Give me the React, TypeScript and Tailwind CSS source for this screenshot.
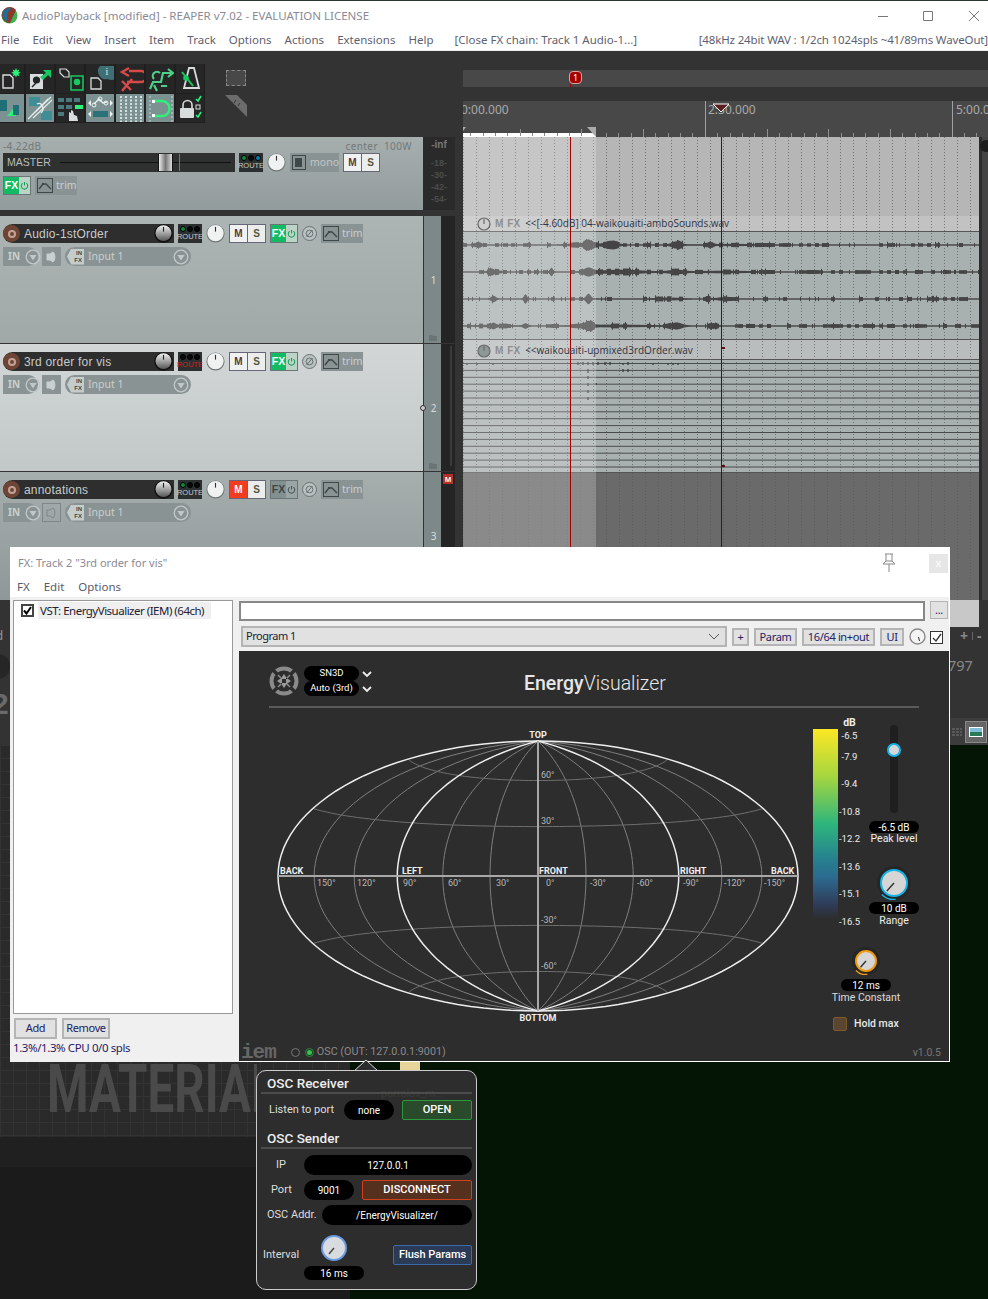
import type { ReactNode } from "react";

const ui = "font-['Noto_Sans',sans-serif]";
const rb = "font-['Roboto',sans-serif]";

// ---------- small shared pieces ----------

function Knob({ size = 19 }: { size?: number }) {
  return (
    <svg width={size} height={size} viewBox="0 0 20 20" className="shrink-0">
      <circle cx="10" cy="10" r="9.5" fill="#6f7676" />
      <circle cx="10" cy="9.6" r="8.6" fill="#f0f2f2" />
      <path d="M10 3v5" stroke="#333" strokeWidth="1.2" />
    </svg>
  );
}

function DarkKnob() {
  return (
    <svg width="19" height="19" viewBox="0 0 20 20" className="shrink-0">
      <defs>
        <linearGradient id="dk" x1="0" y1="0" x2="0" y2="1">
          <stop offset="0" stopColor="#f4f4f4" />
          <stop offset="1" stopColor="#555" />
        </linearGradient>
      </defs>
      <circle cx="10" cy="10" r="9.8" fill="#111" />
      <circle cx="10" cy="9.6" r="8.4" fill="url(#dk)" />
      <path d="M10 3v5" stroke="#222" strokeWidth="1.2" />
    </svg>
  );
}

function Route({ dots, red }: { dots: [string, string, string]; red?: boolean }) {
  return (
    <div className="flex h-[19px] w-[24px] shrink-0 flex-col items-center bg-[#2b2f2f] pt-[2px]">
      <div className="flex gap-[1px]">
        {dots.map((c, i) => (
          <span key={i} className="h-[6px] w-[6px] rounded-full border border-black" style={{ backgroundColor: c }} />
        ))}
      </div>
      <span className={`mt-[1px] font-['Liberation_Sans',sans-serif] text-[7.5px] leading-[8px] ${red ? "text-[#d11f1f]" : "text-[#c4c8c8]"}`}>
        ROUTE
      </span>
    </div>
  );
}

function MuteSolo({ muted }: { muted?: boolean }) {
  return (
    <div className="flex h-[19px] w-[37px] shrink-0 border border-[#667] bg-[#667] font-['Liberation_Sans',sans-serif] text-[10px] font-bold">
      <span className={`flex flex-1 items-center justify-center ${muted ? "bg-[#f23c1f] text-white" : "bg-[#f0f1f1] text-[#5a3a30]"}`}>M</span>
      <span className="ml-[1px] flex flex-1 items-center justify-center bg-[#eceeee] text-[#55553c]">S</span>
    </div>
  );
}

function FxBtn({ on = true }: { on?: boolean }) {
  return (
    <div className="flex h-[19px] w-[28px] shrink-0 border border-[#6b7575] font-['Liberation_Sans',sans-serif] text-[10.5px] font-bold">
      <span className={`flex w-[15px] items-center justify-center ${on ? "bg-[#12bb63] text-white" : "bg-[#849090] text-[#3c4646]"}`}>FX</span>
      <span className={`flex flex-1 items-center justify-center ${on ? "bg-[#bcd4c8]" : "bg-[#9aa5a5]"}`}>
        <svg width="9" height="9" viewBox="0 0 10 10" fill="none" stroke={on ? "#12a058" : "#4a5555"} strokeWidth="1.2">
          <path d="M3 2.4a3.6 3.6 0 1 0 4 0M5 1v4" />
        </svg>
      </span>
    </div>
  );
}

function Trim() {
  return (
    <div className="flex h-[19px] w-[42px] shrink-0 items-center bg-[#8a9393] pl-[2px]">
      <svg width="16" height="15" viewBox="0 0 16 15" fill="none">
        <rect x=".5" y=".5" width="15" height="14" fill="#8a9393" stroke="#3f4848" />
        <path d="M2 11l4-5h3l5 5" stroke="#3f4848" strokeWidth="1.4" />
        <rect x="5" y="5" width="2" height="2" fill="#3f4848" />
      </svg>
      <span className={`ml-[3px] ${ui} text-[10.5px] text-[#c8d0d0]`}>trim</span>
    </div>
  );
}

function Phase() {
  return (
    <svg width="15" height="15" viewBox="0 0 15 15" fill="none" className="shrink-0">
      <circle cx="7.5" cy="7.5" r="7" fill="#b9c2c2" stroke="#69716f" />
      <circle cx="7.5" cy="7.5" r="3.4" stroke="#69716f" />
      <path d="M4.5 11l6-7" stroke="#69716f" />
    </svg>
  );
}

function DownCircle() {
  return (
    <svg width="16" height="16" viewBox="0 0 16 16" fill="none">
      <circle cx="8" cy="8" r="6.8" stroke="#c0c8c8" strokeWidth="1.3" />
      <path d="M4.4 6h7.2L8 11.4z" fill="#c0c8c8" />
    </svg>
  );
}

function Folder() {
  return (
    <svg width="8" height="6" viewBox="0 0 8 6" className="absolute bottom-[2px] left-[5px]">
      <path d="M0 0h3l1 1h4v5H0z" fill="#6a7474" />
    </svg>
  );
}

function TrackPanel({
  name,
  num,
  grow,
  bg,
  dots,
  red,
  muted,
  fxOn = true,
  speakerOff,
  pin,
}: {
  name: string;
  num: string;
  grow: string;
  bg: string;
  dots: [string, string, string];
  red?: boolean;
  muted?: boolean;
  fxOn?: boolean;
  speakerOff?: boolean;
  pin?: boolean;
}) {
  return (
    <div className={`flex ${grow}`}>
      <div className={`flex w-[423px] flex-col pl-[3px] pt-[8px] ${bg}`}>
        <div className="flex h-[19px] items-center">
          <div className="flex h-[19px] w-[171px] items-center rounded-l-full bg-[#2e2e2e] pr-[1px]">
            <span className="flex h-[17px] w-[17px] items-center justify-center rounded-full bg-[#6e4435]">
              <span className="h-[8px] w-[8px] rounded-full border-2 border-[#c2a396]" />
            </span>
            <span className="ml-[4px] flex-1 font-['Liberation_Sans',sans-serif] text-[12px] tracking-[0.2px] text-[#c6cbcb]">{name}</span>
            <DarkKnob />
          </div>
          <div className="ml-[4px] flex items-center">
            <Route dots={dots} red={red} />
            <span className="ml-[4px]"><Knob /></span>
            <span className="ml-[4px]"><MuteSolo muted={muted} /></span>
            <span className="ml-[4px]"><FxBtn on={fxOn} /></span>
            <span className="ml-[4px] flex"><Phase /></span>
            <span className="ml-[4px]"><Trim /></span>
          </div>
        </div>
        <div className="mt-[4px] flex h-[19px] items-center">
          <div className={`flex h-[19px] w-[35px] items-center rounded-r-full bg-[#8a9393] pl-[5px] ${ui} text-[10px] font-bold text-[#c8d0d0]`}>
            IN
            <span className="ml-[5px] flex"><DownCircle /></span>
          </div>
          <div className={`ml-[4px] flex h-[19px] w-[19px] items-center justify-center ${speakerOff ? "border border-[#7d8787]" : "bg-[#8a9393]"}`}>
            <svg width="11" height="12" viewBox="0 0 11 12" fill={speakerOff ? "none" : "#c8d0d0"} stroke={speakerOff ? "#7d8787" : "#c8d0d0"}>
              <path d="M1 3h3l3-2c2.500 2 2.500 8 0 10L4 9H1z" />
            </svg>
          </div>
          <div className={`ml-[4px] flex h-[19px] w-[126px] items-center rounded-full bg-[#8a9393] pl-[2px] pr-[2px] ${ui} text-[10.5px] text-[#c8d0d0]`}>
            <span className="flex h-[16px] w-[17px] flex-col items-end justify-center bg-[#c5cccc] pr-[2px] font-['Liberation_Sans',sans-serif] text-[6px] font-bold leading-[6.500px] text-[#3f4848] [clip-path:polygon(25%_0,100%_0,100%_100%,25%_100%,0_50%)]">
              <span>IN</span>
              <span>FX</span>
            </span>
            <span className="ml-[4px] flex-1">Input 1</span>
            <DownCircle />
          </div>
        </div>
      </div>
      <div className="relative flex w-[18px] flex-col items-center justify-center border-l border-[#333] bg-[#7d8888] pl-[2px] pt-[1px] text-[10px] text-[#d8dddd]">
        <span className={ui}>{num}</span>
        {pin && <span className="absolute left-[-4px] top-[61px] h-[6px] w-[6px] rounded-full border border-[#333] bg-[#c8cccc]" />}
        {num !== "3" && <Folder />}
      </div>
      <div className="flex w-[14px] justify-end bg-[#242424] pr-[3px]">
        {pin && <span className="mt-[2px] h-[120px] w-[2px] bg-[#3a3a3a]" />}
        {num === "3" && (
          <span className={`mr-[-1px] mt-[2px] flex h-[10px] w-[10px] items-center justify-center bg-[#b03030] ${ui} text-[7px] font-bold leading-none text-white`}>M</span>
        )}
      </div>
      <div className="w-[8px] bg-[#333]" />
    </div>
  );
}

// ---------- toolbar ----------

const G = "#2df27a";
const W = "#d8dcdc";
const R = "#d84a4a";

const topIcons: ReactNode[] = [
  <>
    <path d="M3 10h7l3 3v10H3z" stroke={W} strokeWidth="1.4" fill="none" />
    <path d="M16 3l1 2.400 2.400-1-1 2.400 2.400 1-2.400 1 1 2.400-2.400-1-1 2.400-1-2.400-2.400 1 1-2.400-2.400-1 2.400-1-1-2.400 2.400 1z" fill={G} />
  </>,
  <>
    <rect x="4" y="9" width="13" height="15" fill={W} />
    <circle cx="10.5" cy="15" r="3.6" fill="#222" />
    <path d="M6 22l4-4" stroke="#222" strokeWidth="1.5" />
    <path d="M14 12l6-4-3-3h8v8l-3-3-5 5z" fill="#18c860" />
  </>,
  <>
    <rect x="15" y="11" width="12" height="14" fill="none" stroke="#18c860" strokeWidth="1.5" />
    <circle cx="21" cy="17" r="3.2" fill="#18c860" />
    <path d="M17 23l3-3" stroke="#222" />
    <path d="M4 4h6l3 3v5H8L4 8z" fill="none" stroke={W} strokeWidth="1.2" />
  </>,
  <>
    <path d="M5 13h7l3 3v8H5z" fill="none" stroke={W} strokeWidth="1.3" />
    <path d="M14 1h15v13a7 7 0 0 1-7 0 8 8 0 0 1-8-13z" fill="#3f6f74" />
    <text x="21" y="10" fontSize="10" fill="#e0e8e8" fontFamily="Liberation Serif" textAnchor="middle">i</text>
  </>,
  <path d="M13 6H25a5 5 0 0 1 0 11H11m2-14l-7 4 7 4M16 14L6 26m0-10l9 9" fill="none" stroke={R} strokeWidth="2.4" />,
  <path d="M4 24l3-7h8l2-9h8m-3-4l5 4-5 4M11 26l-3-6m7 1h6M8 14a4 4 0 0 1 6-6" fill="none" stroke="#4ed08a" strokeWidth="2.200" />,
  <>
    <path d="M13 3h5l5 20H8z" fill="none" stroke={W} strokeWidth="1.8" />
    <path d="M6 7l11 14" stroke="#18c860" strokeWidth="2" />
    <circle cx="10" cy="13" r="2.8" fill="#18c860" />
  </>,
];

const botIcons: ReactNode[] = [
  <>
    <rect x="0" y="6" width="7" height="11" fill="#1f6f78" />
    <path d="M7 22L16 11v11z" fill={G} />
    <rect x="13" y="11" width="6" height="10" fill="#1f6f78" />
  </>,
  <>
    <rect x="3" y="3" width="11" height="9" fill="#3f8e96" />
    <rect x="15" y="17" width="11" height="9" fill="#3f8e96" />
    <path d="M2 25L25 3M4 23L22 5M7 24L26 6" stroke="#e4eaea" strokeWidth="1.2" fill="none" />
    <path d="M11 10c5-3 8 5 4 9" stroke="#e4eaea" fill="none" strokeWidth="1.4" />
  </>,
  <>
    <path d="M2 4h6v4H2zM10 4h6v4h-6zM18 4h6v4h-6zM2 11h6v4H2zM2 18h6v4H2zM10 11h6v4h-6z" fill="#4a7a7e" />
    <rect x="19" y="11" width="8" height="4" fill={G} />
    <path d="M13 27v-9l2 1v-3l2 1 1 4 3 1 1 5H13z" fill={W} />
  </>,
  <>
    <path d="M8 10l5-5 4 4 4-1" fill="none" stroke="#eef2f2" strokeWidth="1.4" />
    <circle cx="8" cy="11" r="2" fill="none" stroke="#eef2f2" />
    <circle cx="14" cy="5" r="2" fill="none" stroke="#eef2f2" />
    <circle cx="20" cy="9" r="2" fill="none" stroke="#eef2f2" />
    <rect x="7" y="17" width="15" height="6" fill="#2a7278" />
    <path d="M5 17v6l-3-3zM24 17v6l3-3zM5 6v6L2 9zM24 6v6l3-3z" fill="#eef2f2" />
  </>,
  <path d="M5 2v26M10 2v26M15 2v26M20 2v26M25 2v26" stroke="#eef2f2" strokeWidth="1.6" strokeDasharray="2 1.5" />,
  <>
    <path d="M4 2v26M26 2v26" stroke="#c8d4d4" strokeDasharray="2 2" />
    <path d="M6 7h10a7 7 0 0 1 0 15H6" fill="none" stroke={G} strokeWidth="2.400" />
    <path d="M6 6h3v3H6zM6 20h3v3H6z" fill="#fff" />
  </>,
  <>
    <path d="M7 14v-3a4.500 4.500 0 0 1 9 0v3" fill="none" stroke={W} strokeWidth="1.6" />
    <rect x="4" y="14" width="14" height="10" rx="1" fill={W} />
    <path d="M20 5l2 2 3-5M20 21l2 2 3-5" stroke={G} fill="none" strokeWidth="1.6" />
    <rect x="20" y="11" width="4" height="4" stroke={W} fill="none" />
  </>,
];

function ToolBtn({ active, w = 28, children }: { active?: boolean; w?: number; children: ReactNode }) {
  return (
    <div className={`flex h-full items-center justify-end ${w === 24 ? "w-[24px]" : "w-[28px]"} ${active ? "bg-[#7c9292]" : "bg-[#262626]"}`}>
      <svg width={w} height="28" viewBox={`0 0 ${w} 28`}>
        {children}
      </svg>
    </div>
  );
}

function Toolbar() {
  const act = [true, true, false, true, true, true, false];
  return (
    <div className="flex h-[86px] items-start bg-[#333] pt-[13px]">
      <div className="flex h-[59px] w-[205px] flex-col gap-[1px] bg-[#1f1f1f]">
        <div className="flex h-[29px] gap-[2px]">
          {topIcons.map((ic, i) => (
            <ToolBtn key={i} w={i === 0 ? 24 : 28}>{ic}</ToolBtn>
          ))}
        </div>
        <div className="flex h-[28px] gap-[2px]">
          {botIcons.map((ic, i) => (
            <ToolBtn key={i} w={i === 0 ? 24 : 28} active={act[i]}>{ic}</ToolBtn>
          ))}
        </div>
      </div>
      <div className="ml-[20px] flex flex-col items-center gap-[9px] pt-[6px]">
        <div className="h-[16px] w-[20px] border border-dashed border-[#888] bg-[#484848]" />
        <svg width="22" height="22" viewBox="0 0 22 22">
          <path d="M0 0h12l10 10v12z" fill="#6c6c6c" />
          <path d="M11 5l-2 3M15 8l-2 3" stroke="#333" />
        </svg>
      </div>
    </div>
  );
}

function MasterPanel() {
  return (
    <div className="flex h-[73px]">
      <div className="flex w-[423px] flex-col bg-gradient-to-b from-[#a6aeae] to-[#939c9c] px-[3px] pt-[3px]">
        <div className={`flex h-[13px] items-center justify-between pr-[8px] ${ui} text-[10px] tracking-[0.4px] text-[#727a7a]`}>
          <span>-4.22dB</span>
          <span>center&nbsp; 100W</span>
        </div>
        <div className="flex h-[19px] items-center">
          <div className="flex h-[19px] w-[232px] items-center bg-[#2f3030] pl-[4px]">
            <span className="w-[53px] font-['Liberation_Sans',sans-serif] text-[10.5px] text-[#b8bdbd]">MASTER</span>
            <div className="relative h-[1px] w-[171px] bg-[#111]">
              <span className="absolute left-[98px] top-[-8px] h-[17px] w-[15px] border-x border-[#111] bg-gradient-to-r from-[#eee] via-[#777] to-[#ddd]" />
              <span className="absolute left-[119px] top-[-8px] h-[17px] w-[1px] bg-[#777]" />
            </div>
          </div>
          <span className="ml-[4px]"><Route dots={["#0a8a3a", "#0a0a0a", "#0a7fb0"]} /></span>
          <span className="ml-[4px]"><Knob /></span>
          <div className="ml-[4px] flex h-[19px] w-[49px] items-center bg-[#8a9393] pl-[2px]">
            <span className="flex h-[15px] w-[15px] items-center justify-center border border-[#3f4848]">
              <span className="h-[9px] w-[7px] bg-[#3f4848]" />
            </span>
            <span className={`ml-[4px] ${ui} text-[10.5px] text-[#c0c8c8]`}>mono</span>
          </div>
          <span className="ml-[4px]"><MuteSolo /></span>
        </div>
        <div className="mt-[4px] flex items-center gap-[4px]">
          <FxBtn />
          <Trim />
        </div>
      </div>
      <div className={`flex w-[32px] flex-col items-center bg-[#2a2a2a] pt-[2px] font-['Liberation_Sans',sans-serif] text-[9px] font-bold leading-[12px] text-[#4c4c4c]`}>
        <span className="mb-[6px] text-[10px] text-[#777]">-inf</span>
        <span>-18-</span>
        <span>-30-</span>
        <span>-42-</span>
        <span>-54-</span>
      </div>
      <div className="w-[8px] bg-[#333]" />
    </div>
  );
}

// ---------- arrange ----------

type Burst = [number, number, number];

function rnd(i: number) {
  const s = Math.sin(i * 12.9898) * 43758.5453;
  return s - Math.floor(s);
}

function wavePath(cy: number, bursts: Burst[], seed: number, density: number) {
  let d = "";
  for (let x = 0; x < 516; x += 1) {
    let a = 0.7;
    for (const [bx, bw, ba] of bursts) {
      const t = (x - bx) / bw;
      a += ba * Math.exp(-t * t);
    }
    const block = Math.floor(x / 4);
    const r = rnd(block * 0.37 + seed);
    if (r > density) a += 0.5 + r * 0.8;
    if (rnd(x * 1.7 + seed) > 0.93) a += 1.4;
    d += `M${x + 0.5} ${(cy - a).toFixed(1)}V${(cy + a).toFixed(1)}`;
  }
  return d;
}

const waveCh: { cy: number; bursts: Burst[]; seed: number; density: number }[] = [
  { cy: 13, seed: 1, density: 0.55, bursts: [[16, 3, 2], [125, 4, 4], [118, 14, 1.2], [143, 7, 1.4], [151, 6, 2], [213, 6, 3], [248, 3, 2], [270, 30, 0.4]] },
  { cy: 40, seed: 2, density: 0.62, bursts: [[28, 3, 2], [88, 2, 3.5], [32, 8, 1], [125, 6, 3.5], [158, 26, 1.6], [213, 10, 1.5], [260, 30, 0.6]] },
  { cy: 67, seed: 3, density: 0.75, bursts: [[30, 3, 2.5], [62, 2, 4], [125, 3, 4.5], [205, 14, 0.8], [245, 2, 3], [258, 6, 1]] },
  { cy: 94, seed: 4, density: 0.6, bursts: [[30, 3, 2], [62, 3, 2], [125, 5, 4], [213, 7, 2.8], [250, 4, 2.2], [150, 40, 0.7], [30, 20, 0.6]] },
];

function Waveform() {
  return (
    <svg width="516" height="107" className="block">
      {waveCh.map((c) => (
        <path key={c.cy} d={wavePath(c.cy, c.bursts, c.seed, c.density)} stroke="#444" strokeWidth="1" fill="none" />
      ))}
    </svg>
  );
}

const lineYs = Array.from({ length: 16 }, (_, i) => 3.5 + i * 6.9);

function ManyLines() {
  return (
    <svg width="516" height="112" className="block">
      {lineYs.map((y) => (
        <path key={y} d={`M0 ${y.toFixed(1)}H516`} stroke="#4a4a4a" strokeWidth="1" />
      ))}
      <path d="M4 3v2M14 3v2M30 3v2M115 2v3M120 2v3M125 2v3M130 2v3M135 2v3M142 2v3M147 2v3M160 3v2M165 2v3M190 3v2M205 3v2M210 3v2M215 3v2M125 9v4M160 9v3M165 9v3M125 16v3M125 23v3M133 23v2M125 30v3M125 37v3" stroke="#444" strokeWidth="1.5" />
    </svg>
  );
}

function ItemHead({ label, dim }: { label: ReactNode; dim?: boolean }) {
  return (
    <div className="relative z-10 flex h-[15px] items-center pl-[14px]">
      <svg width="14" height="14" viewBox="0 0 14 14" fill={dim ? "#8f9797" : "none"} stroke="#6a6a6a" strokeWidth="1.2">
        <circle cx="7" cy="7" r="6" />
        <path d="M7 2v5" />
      </svg>
      <span className={`ml-[4px] font-['Liberation_Sans',sans-serif] text-[10px] font-bold text-[#8c9090]`}>M</span>
      <span className={`ml-[4px] font-['Liberation_Sans',sans-serif] text-[10px] font-bold text-[#8c9090]`}>FX</span>
      <span className="ml-[5px] font-['Open_Sans',sans-serif] text-[10px] text-[#2f3545]">{label}</span>
    </div>
  );
}

function Ruler() {
  const ticks = Array.from({ length: 44 }, (_, i) => i);
  return (
    <svg width="525" height="36" className="block">
      <rect width="525" height="36" fill="#484848" />
      {ticks.map((i) => {
        const x = Math.round(-5.2 + 12.35 * i) + 0.5;
        const major = i % 20 === 0;
        const mid = i % 5 === 0;
        return <path key={i} d={`M${x} ${major ? 0 : mid ? 28 : 32}V36`} stroke={major ? "#a0a0a0" : "#909090"} />;
      })}
      <rect x="0" y="32" width="133" height="4" fill="#fff" />
      {ticks.slice(0, 11).map((i) => (
        <path key={i} d={`M${Math.round(-5.2 + 12.35 * i) + 0.5} 32v3`} stroke="#888" />
      ))}
      <path d="M124 26h9v10zM0 26h3l-3 4z" fill="#aaa" />
      <text x="-2" y="13" fontSize="12" fill="#a8a8a8" fontFamily="Noto Sans">0:00.000</text>
      <text x="245" y="13" fontSize="12" fill="#a8a8a8" fontFamily="Noto Sans">2:30.000</text>
      <text x="493" y="13" fontSize="12" fill="#a8a8a8" fontFamily="Noto Sans">5:00.0</text>
      <path d="M250 3h16l-8 8z" fill="#5a2020" stroke="#fff" />
    </svg>
  );
}

function ArrangeOverlay() {
  const grid = Array.from({ length: 40 }, (_, i) => 0.5 + i * 13);
  return (
    <svg width="516" height="463" className="absolute left-0 top-0">
      {grid.map((x) => (
        <path key={x} d={`M${x} 0V463`} stroke="#555" strokeOpacity="0.7" strokeDasharray="1 2" />
      ))}
      <rect x="0" y="0" width="133" height="463" fill="#fff" fillOpacity="0.22" />
      <path d="M107.5 0V463" stroke="#a30000" />
      <path d="M258.5 0V463" stroke="#4a1414" />
      <path d="M259 211h3M259 329h3" stroke="#5a1010" strokeWidth="2" />
    </svg>
  );
}

function Arrange() {
  return (
    <div className="flex flex-col">
      <div className="h-[19px] bg-[#333]" />
      <div className="relative h-[17px] bg-[#484848]">
        <span className={`absolute left-[106px] top-[1px] flex h-[13px] w-[13px] items-center justify-center rounded-[4px] border border-[#e0a0a0] bg-[#a30000] ${ui} text-[9px] leading-none text-white`}>1</span>
        <span className="absolute left-[107px] top-[14px] h-[3px] w-[1px] bg-[#a30000]" />
      </div>
      <div className="h-[14px] bg-[#333]" />
      <Ruler />
      <div className="flex">
        <div className="relative w-[516px]">
          <div className="flex flex-col">
            <div className="h-[79px] bg-[#b6b6b6]" />
            <div className="h-[15px] bg-[#c2c2c2]">
              <ItemHead label={<>&lt;&lt;[-4.60dB] 04-waikouaiti-amboSounds.wav</>} />
            </div>
            <div className="h-[108px] border-t border-[#555] bg-[#a9b0b0]"><Waveform /></div>
            <div className="h-[1px] bg-[#555]" />
            <div className="h-[19px] bg-[#b9bdbd] pt-[3px]">
              <ItemHead dim label="<<waikouaiti-upmixed3rdOrder.wav" />
            </div>
            <div className="h-[1px] bg-[#555]" />
            <div className="h-[112px] bg-[#a9b0b0]"><ManyLines /></div>
            <div className="h-[128px] border-t border-[#555] bg-[#6a6a6a]" />
          </div>
          <ArrangeOverlay />
        </div>
        <div className="flex w-[9px] flex-col border-l-[3px] border-[#2c2c2c] bg-[#444]">
          <span className="-ml-[2px] mt-[3px] h-[12px] w-[8px] rounded-l-full bg-[#1c1c1c]" />
        </div>
      </div>
      <div className="flex h-[27px]">
        <div className="w-[516px] bg-[#c8c8c8]" />
        <div className="flex-1 bg-[#333]" />
      </div>
    </div>
  );
}

// ---------- plugin ----------

const S2 = Math.SQRT2;
const toRad = Math.PI / 180;

function hammer(lon: number, lat: number) {
  const l = lon * toRad;
  const p = lat * toRad;
  const d = Math.sqrt(1 + Math.cos(p) * Math.cos(l / 2));
  const x = (2 * S2 * Math.cos(p) * Math.sin(l / 2)) / d;
  const y = (S2 * Math.sin(p)) / d;
  return [269 + x * 91.92, 151 - y * 95.46];
}

function meridian(lon: number) {
  let d = "";
  for (let lat = -90; lat <= 90; lat += 3) {
    const [x, y] = hammer(lon, lat);
    d += `${d ? "L" : "M"}${x.toFixed(1)} ${y.toFixed(1)}`;
  }
  return d;
}

function parallel(lat: number) {
  let d = "";
  for (let lon = -180; lon <= 180; lon += 5) {
    const [x, y] = hammer(lon, lat);
    d += `${d ? "L" : "M"}${x.toFixed(1)} ${y.toFixed(1)}`;
  }
  return d;
}

function Sphere() {
  const thin = [-150, -120, -60, -30, 30, 60, 120, 150];
  const deg: [string, number][] = [
    ["150°", 48], ["120°", 88], ["90°", 134], ["60°", 179], ["30°", 227], ["0°", 277],
    ["-30°", 321], ["-60°", 368], ["-90°", 414], ["-120°", 455], ["-150°", 495],
  ];
  const lat: [string, number][] = [["60°", 53], ["30°", 99], ["-30°", 198], ["-60°", 244]];
  const bold = (t: string, x: number, y: number, anchor = "start") => (
    <text key={t + x} x={x} y={y} fontSize="9" fontWeight="700" fill="#f0f0f0" textAnchor={anchor} fontFamily="Roboto">
      {t}
    </text>
  );
  return (
    <svg width="540" height="302" className="shrink-0">
      {thin.map((l) => (
        <path key={l} d={meridian(l)} fill="none" stroke="#7e7e7e" strokeWidth="1" />
      ))}
      {[30, 60, -30, -60].map((l) => (
        <path key={l} d={parallel(l)} fill="none" stroke="#6e6e6e" strokeWidth="1" />
      ))}
      <path d={meridian(90)} fill="none" stroke="#eee" strokeWidth="1.5" />
      <path d={meridian(-90)} fill="none" stroke="#eee" strokeWidth="1.5" />
      <path d={meridian(180)} fill="none" stroke="#eee" strokeWidth="1.5" />
      <path d={meridian(-180)} fill="none" stroke="#eee" strokeWidth="1.5" />
      <path d="M9 151H529M269 16V286" stroke="#a8a8a8" strokeWidth="2" />
      {bold("TOP", 269, 13, "middle")}
      {bold("BOTTOM", 269, 296, "middle")}
      {bold("BACK", 11, 149)}
      {bold("LEFT", 133, 149)}
      {bold("FRONT", 270, 149)}
      {bold("RIGHT", 411, 149)}
      {bold("BACK", 502, 149)}
      {deg.map(([t, x]) => (
        <text key={t} x={x} y={161} fontSize="9" fill="#b8b8b8" fontFamily="Roboto">{t}</text>
      ))}
      {lat.map(([t, y]) => (
        <text key={t} x={272} y={y} fontSize="9" fill="#b8b8b8" fontFamily="Roboto">{t}</text>
      ))}
    </svg>
  );
}

function Pill({ children, className }: { children: ReactNode; className: string }) {
  return (
    <div className={`flex items-center justify-center rounded-full bg-black ${rb} text-white ${className}`}>{children}</div>
  );
}

function IemKnob({ size, color, inner }: { size: number; color: string; inner: number }) {
  const c = size / 2;
  return (
    <svg width={size} height={size} viewBox={`0 0 ${size} ${size}`} className="shrink-0">
      <circle cx={c} cy={c} r={c} fill="#262626" />
      <circle cx={c} cy={c} r={inner} fill="#d6d6d6" stroke={color} strokeWidth="2" />
      <path d={`M${c} ${c}L${c - inner * 0.55} ${c + inner * 0.62}`} stroke="#333" strokeWidth="1.4" />
      <path
        d={`M${c - c * 0.72} ${c + c * 0.68}A${c} ${c} 0 0 0 ${c + c * 0.1} ${size - 0.5}`}
        fill="none"
        stroke={color}
        strokeWidth="1.5"
      />
    </svg>
  );
}

const scale: [string, string][] = [
  ["-6.5", "h-[21px]"],
  ["-7.9", "h-[27px]"],
  ["-9.4", "h-[28px]"],
  ["-10.8", "h-[27px]"],
  ["-12.2", "h-[28px]"],
  ["-13.6", "h-[27px]"],
  ["-15.1", "h-[28px]"],
  ["-16.5", "h-[12px]"],
];

function Controls() {
  return (
    <div className={`flex flex-col ${rb} text-white`}>
      <div className="flex pl-[4px]">
        <div className="mt-[12px] h-[190px] w-[25px] bg-[linear-gradient(#fde725,#a5d63f_25%,#2eb57d_50%,#26828e_68%,#2c6a90_78%,#2f3a55_93%,#2d2d2d)]" />
        <div className="flex w-[31px] flex-col items-center pr-[8px] text-[9.5px] leading-[12px] text-[#eee]">
          <span className="h-[13px] text-[10.5px] font-bold">dB</span>
          {scale.map(([t, h]) => (
            <span key={t} className={h}>{t}</span>
          ))}
        </div>
        <div className="flex w-[50px] flex-col items-center pt-[8px]">
          <div className="relative h-[88px] w-[8px] rounded-full bg-[#1f1f1f]">
            <span className="absolute left-[-3px] top-[18px] h-[14px] w-[14px] rounded-full border-2 border-[#14b4e6] bg-[#d6d6d6]" />
          </div>
          <Pill className="mt-[8px] h-[12px] w-[50px] text-[10px]">-6.5 dB</Pill>
          <span className="mt-[-1px] text-[10.5px] leading-[14px] text-[#eee]">Peak level</span>
          <div className="mt-[20px] flex"><IemKnob size={34} color="#14b4e6" inner={13} /></div>
          <Pill className="mt-[2px] h-[12px] w-[50px] text-[10px]">10 dB</Pill>
          <span className="text-[10.5px] leading-[14px] text-[#eee]">Range</span>
        </div>
      </div>
      <div className="ml-[22px] mt-[19px] flex w-[70px] flex-col items-center">
        <IemKnob size={28} color="#f09a10" inner={10} />
        <Pill className="mt-[4px] h-[12px] w-[50px] text-[10px]">12 ms</Pill>
        <span className="whitespace-nowrap text-[10.5px] leading-[14px] text-[#ddd]">Time Constant</span>
      </div>
      <div className="ml-[24px] mt-[11px] flex items-center">
        <span className="h-[14px] w-[14px] rounded-[2px] border border-[#7a5a2a] bg-[#5a4630]" />
        <span className="ml-[7px] text-[10.5px] font-medium text-[#e8e8e8]">Hold max</span>
      </div>
    </div>
  );
}

function IemIcon() {
  return (
    <svg width="30" height="30" viewBox="0 0 30 30" fill="none" className="shrink-0">
      <circle cx="15" cy="15" r="12.5" stroke="#8a8a8a" strokeWidth="4" />
      <path d="M4 4l8 8M26 4l-8 8M4 26l8-8M26 26l-8-8" stroke="#2d2d2d" strokeWidth="3.500" />
      <path d="M15 8l3.500 5h-7zM15 22l3.500-5h-7zM8 15l5-3.500v7zM22 15l-5-3.500v7z" fill="#9a9a9a" />
      <path d="M9 9l3 3M21 9l-3 3M9 21l3-3M21 21l-3-3" stroke="#8a8a8a" strokeWidth="1.5" />
    </svg>
  );
}

function Plugin() {
  return (
    <div className={`flex h-[411px] flex-col border-b border-white bg-[#2d2d2d] ${rb}`}>
      <div className="mx-[30px] flex h-[57px] items-start border-b-2 border-[#5a5a5a] pt-[15px]">
        <IemIcon />
        <div className="ml-[5px] flex flex-col">
          <div className="flex items-center gap-[2px]">
            <Pill className="h-[15px] w-[55px] text-[9.5px]">SN3D</Pill>
            <svg width="12" height="12" viewBox="0 0 12 12" fill="none" stroke="#eee" strokeWidth="1.8"><path d="M2 4l4 4 4-4" /></svg>
          </div>
          <div className="flex items-center gap-[2px]">
            <Pill className="h-[15px] w-[55px] text-[9.5px]">Auto (3rd)</Pill>
            <svg width="12" height="12" viewBox="0 0 12 12" fill="none" stroke="#eee" strokeWidth="1.8"><path d="M2 4l4 4 4-4" /></svg>
          </div>
        </div>
        <div className="ml-[151px] mt-[8px] text-[19.5px] leading-none text-[#e6e6e6]">
          <span className="font-medium">Energy</span>
          <span className="font-light">Visualizer</span>
        </div>
      </div>
      <div className="flex flex-1 pl-[30px] pt-[9px]">
        <div className="mt-[8px]"><Sphere /></div>
        <Controls />
      </div>
      <div className="flex h-[24px] items-center pl-[2px] pr-[8px] pt-[7px]">
        <span className="font-['Liberation_Mono',monospace] text-[21px] font-bold leading-[17px] tracking-[-1px] text-[#666]">iem</span>
        <span className="ml-[15px] h-[9px] w-[9px] rounded-full border border-[#777]" />
        <span className="ml-[5px] flex h-[9px] w-[9px] items-center justify-center rounded-full border border-[#2a8a3a]">
          <span className="h-[5px] w-[5px] rounded-full bg-[#2ec84a]" />
        </span>
        <span className="ml-[3px] flex-1 text-[10.8px] text-[#8a8a8a]">OSC (OUT: 127.0.0.1:9001)</span>
        <span className="text-[10.5px] text-[#777]">v1.0.5</span>
      </div>
    </div>
  );
}

function WinBtn({ children, className }: { children: ReactNode; className: string }) {
  return (
    <div className={`flex items-center justify-center border-2 border-[#b4b4b4] bg-[#e1e1e1] ${ui} text-[11px] tracking-[-0.35px] text-[#222266] ${className}`}>
      {children}
    </div>
  );
}

function FxWindow() {
  return (
    <div className={`absolute left-[10px] top-[547px] flex h-[515px] w-[940px] flex-col border-r border-white bg-[#f0f0f0] ${ui}`}>
      <div className="flex h-[29px] items-center bg-white pl-[8px] pr-[1px] pt-[3px]">
        <span className="flex-1 text-[11px] text-[#8a8a94]">FX: Track 2 "3rd order for vis"</span>
        <svg width="16" height="20" viewBox="0 0 16 20" fill="none" stroke="#888" className="mr-[32px]">
          <path d="M4 1h8M5 1v7M11 1v7M2 11l3-3h6l3 3zM8 11v8" />
        </svg>
        <span className="flex h-[19px] w-[19px] items-center justify-center bg-[#e6e6e6] text-[11px] text-white">x</span>
      </div>
      <div className="flex h-[21px] items-center gap-[14px] bg-white pl-[7px] pt-[1px] text-[11.5px] text-[#5a5a6a]">
        <span>FX</span>
        <span>Edit</span>
        <span>Options</span>
      </div>
      <div className="flex flex-1">
        <div className="flex w-[229px] flex-col pl-[3px] pt-[3px]">
          <div className="flex h-[414px] w-[220px] items-start border border-[#999] bg-white pl-[7px] pt-[1px]">
            <span className="mt-[2px] flex h-[13px] w-[13px] items-center justify-center border-2 border-[#444] bg-white">
              <svg width="9" height="9" viewBox="0 0 9 9" fill="none" stroke="#000" strokeWidth="2"><path d="M1 4.500l2.500 3L8 1" /></svg>
            </span>
            <span className="ml-[4px] flex h-[17px] w-[173px] items-center bg-[#efefef] pl-[2px] text-[11.5px] tracking-[-0.5px] text-[#223]">
              VST: EnergyVisualizer (IEM) (64ch)
            </span>
          </div>
          <div className="ml-[1px] mt-[4px] flex gap-[5px]">
            <WinBtn className="h-[21px] w-[43px]">Add</WinBtn>
            <WinBtn className="h-[21px] w-[48px]">Remove</WinBtn>
          </div>
          <span className="mt-[1px] text-[11.5px] leading-[16px] tracking-[-0.4px] text-[#2a1a66]">1.3%/1.3% CPU 0/0 spls</span>
        </div>
        <div className="flex flex-1 flex-col">
          <div className="flex h-[29px] items-start pt-[4px]">
            <div className="h-[20px] w-[686px] border-2 border-[#888] bg-white" />
            <WinBtn className="ml-[5px] h-[18px] w-[18px] !border">...</WinBtn>
          </div>
          <div className="flex h-[25px] items-start pl-[2px]">
            <div className="flex h-[21px] w-[486px] items-center justify-between border-2 border-[#b4b4b4] bg-[#e1e1e1] pl-[3px] pr-[5px] text-[11px] tracking-[-0.5px] text-[#223]">
              <span>Program 1</span>
              <svg width="12" height="8" viewBox="0 0 12 8" fill="none" stroke="#555"><path d="M1 1l5 5 5-5" /></svg>
            </div>
            <WinBtn className="ml-[5px] mt-[2px] h-[18px] w-[17px]">+</WinBtn>
            <WinBtn className="ml-[5px] mt-[2px] h-[18px] w-[43px]">Param</WinBtn>
            <WinBtn className="ml-[5px] mt-[2px] h-[18px] w-[73px]">16/64 in+out</WinBtn>
            <WinBtn className="ml-[5px] mt-[2px] h-[18px] w-[24px]">UI</WinBtn>
            <svg width="17" height="17" viewBox="0 0 17 17" fill="none" className="ml-[5px] mt-[2px] shrink-0">
              <circle cx="8.5" cy="8.5" r="7.5" fill="#f4f4f4" stroke="#8a8a8a" strokeWidth="1.4" />
              <path d="M9.5 9l1 4" stroke="#333" />
            </svg>
            <span className="ml-[4px] mt-[5px] flex h-[13px] w-[13px] items-center justify-center border border-[#333] bg-white">
              <svg width="10" height="10" viewBox="0 0 10 10" fill="none" stroke="#333" strokeWidth="1.3"><path d="M1 5l3 3 5-7" /></svg>
            </span>
          </div>
          <Plugin />
        </div>
      </div>
    </div>
  );
}

function OscPopup() {
  const h = `${rb} text-[13.5px] font-medium leading-[14px] text-[#eee]`;
  const lbl = `${rb} text-[11px] text-[#ddd]`;
  return (
    <div className="absolute left-[256px] top-[1070px] h-[220px] w-[221px]">
      <svg width="26" height="13" viewBox="0 0 26 13" className="absolute left-[97px] top-[-11px]" fill="#2d2d2d" stroke="#ddd">
        <path d="M0 13L13 1l13 12" />
      </svg>
      <div className={`relative flex h-full flex-col rounded-[10px] border border-[#ccc] bg-[#2d2d2d] px-[4px] pt-[5px] ${rb}`}>
        <span className="absolute left-[124px] top-[17px] text-[11px] leading-[12px] text-[#393939]">parralax_m...</span>
        <div className={`relative border-b-2 border-[#4c4c4c] pb-[2px] pl-[6px] ${h}`}>OSC Receiver</div>
        <div className="relative mt-[6px] flex h-[20px] items-center">
          <span className={`ml-[8px] w-[75px] ${lbl}`}>Listen to port</span>
          <Pill className="h-[20px] w-[50px] text-[10px]">none</Pill>
          <span className="ml-[8px] flex h-[20px] w-[70px] items-center justify-center rounded-[2px] border border-[#2c9a3c] bg-[#2a4a2c] text-[11px] font-medium text-white">OPEN</span>
        </div>
        <div className={`mt-[11px] border-b-2 border-[#4c4c4c] pb-[2px] pl-[6px] ${h}`}>OSC Sender</div>
        <div className="mt-[6px] flex h-[20px] items-center">
          <span className={`w-[43px] pr-[18px] text-right ${lbl}`}>IP</span>
          <Pill className="h-[20px] w-[168px] text-[10px]">127.0.0.1</Pill>
        </div>
        <div className="mt-[5px] flex h-[20px] items-center">
          <span className={`w-[43px] pl-[10px] ${lbl}`}>Port</span>
          <Pill className="h-[20px] w-[50px] text-[10px]">9001</Pill>
          <span className="ml-[8px] flex h-[20px] w-[110px] items-center justify-center rounded-[2px] border border-[#d0401a] bg-[#55301f] text-[11px] font-medium text-white">DISCONNECT</span>
        </div>
        <div className="mt-[5px] flex h-[20px] items-center">
          <span className={`w-[61px] pl-[6px] ${lbl}`}>OSC Addr.</span>
          <Pill className="h-[20px] w-[150px] text-[10px]">/EnergyVisualizer/</Pill>
        </div>
        <div className="mt-[10px] flex items-start">
          <span className={`mt-[12px] w-[43px] pl-[2px] ${lbl}`}>Interval</span>
          <div className="flex w-[60px] flex-col items-center">
            <svg width="26" height="28" viewBox="0 0 26 28">
              <circle cx="13" cy="13" r="12" fill="#d8dce0" stroke="#6a9ae0" strokeWidth="2" />
              <path d="M13 13l-5 6" stroke="#444" strokeWidth="1.4" />
            </svg>
            <Pill className="mt-[3px] h-[14px] w-[60px] text-[10px]">16 ms</Pill>
          </div>
          <span className="ml-[29px] mt-[10px] flex h-[20px] w-[79px] items-center justify-center rounded-[2px] border border-[#3f6ab0] bg-[#2b3a55] text-[11px] font-medium text-white">Flush Params</span>
        </div>
      </div>
    </div>
  );
}

// ---------- page ----------

function Docker() {
  return (
    <div className="flex flex-1">
      <div className="flex w-[350px] flex-col overflow-hidden">
        <div className="flex h-[392px] flex-col justify-end bg-[#2a2a2a] bg-[linear-gradient(90deg,#333_1px,transparent_1px),linear-gradient(#333_1px,transparent_1px)] bg-[size:13px_13px] pb-[21px] pl-[47px]">
          <div className="h-[52px] w-[210px] overflow-hidden">
            <span className="block origin-left scale-x-[0.72] whitespace-nowrap font-['Roboto',sans-serif] text-[66px] font-bold leading-[52px] text-[#4a4a4a]">MATERIAL</span>
          </div>
        </div>
        <div className="h-[30px] bg-[#202020]" />
        <div className="flex-1 bg-[#1b1b1b]" />
      </div>
      <div className="flex-1 bg-[#051505] pl-[50px] pt-[316px]">
        <div className="h-[10px] w-[20px] bg-[#e6d49a]" />
      </div>
    </div>
  );
}

export default function App() {
  return (
    <div className={`flex h-[1299px] w-[988px] flex-col overflow-hidden bg-[#333] ${ui}`}>
      <div className="h-[1px] bg-[#2a3a30]" />
      <div className="flex h-[29px] items-center bg-white pl-[1px]">
        <svg width="17" height="17" viewBox="0 0 17 17" className="shrink-0">
          <circle cx="8.5" cy="8.5" r="8" fill="#3fb24f" />
          <path d="M3 2.500A8 8 0 0 1 15 3L9 16a8 8 0 0 1-6-13.500z" fill="#8a3a2a" />
          <path d="M2 5A8 8 0 0 1 10 1C7 4 5 8 7 15A8 8 0 0 1 2 5z" fill="#1e6f9a" />
        </svg>
        <span className="ml-[4px] flex-1 text-[11.5px] text-[#8a8a96]">AudioPlayback [modified] - REAPER v7.02 - EVALUATION LICENSE</span>
        <svg width="110" height="14" viewBox="0 0 110 14" fill="none" stroke="#777">
          <path d="M0 7.500H10M45.500 2.500h9v9h-9zM91 2l10 10M101 2L91 12" />
        </svg>
      </div>
      <div className="flex h-[20px] items-center whitespace-nowrap bg-white pl-[1px] text-[11.5px] text-[#5f5f70]">
        <div className="flex gap-[13px]">
          {["File", "Edit", "View", "Insert", "Item", "Track", "Options", "Actions", "Extensions", "Help"].map((m) => (
            <span key={m}>{m}</span>
          ))}
        </div>
        <span className="ml-[21px] w-[245px]">[Close FX chain: Track 1 Audio-1...]</span>
        <span className="tracking-[-0.14px]">[48kHz 24bit WAV : 1/2ch 1024spls ~41/89ms WaveOut]</span>
      </div>
      <div className="h-[1px] bg-[#eee]" />
      <div className="flex h-[576px]">
        <div className="flex w-[463px] flex-col bg-[#333]">
          <Toolbar />
          <MasterPanel />
          <div className="h-[6px]" />
          <TrackPanel name="Audio-1stOrder" num="1" grow="h-[127px]" bg="bg-gradient-to-b from-[#adb4b4] to-[#a0a8a8]" dots={["#0a8a3a", "#0a0a0a", "#0a0a0a"]} />
          <div className="h-[1px] bg-[#333]" />
          <TrackPanel name="3rd order for vis" num="2" grow="h-[127px]" bg="bg-gradient-to-b from-[#d2d6d6] to-[#c2c8c8]" dots={["#0a0a0a", "#0a0a0a", "#0a0a0a"]} red pin />
          <div className="h-[1px] bg-[#333]" />
          <TrackPanel name="annotations" num="3" grow="h-[128px]" bg="bg-gradient-to-b from-[#a6aeae] to-[#8f9898]" dots={["#0a8a3a", "#0a0a0a", "#0a0a0a"]} muted fxOn={false} speakerOff />
        </div>
        <div className="w-[525px]">
          <Arrange />
        </div>
      </div>
      <div className="flex h-[118px] justify-between overflow-hidden bg-[#333]">
        <div className="flex w-[10px] flex-col overflow-hidden">
          <span className="-ml-[9px] text-[12px] text-[#999]">rd</span>
          <span className="-ml-[14px] mt-[9px] h-[25px] w-[24px] shrink-0 rounded-full bg-[#262626]" />
          <span className="-ml-[8px] mt-[10px] font-['Liberation_Sans',sans-serif] text-[30px] font-bold leading-none text-[#6a6a6a]">2</span>
        </div>
        <div className="flex w-[38px] flex-col">
          <div className="flex h-[18px] items-center gap-[4px] pl-[10px] text-[#888]">
            <span className="text-[14px] font-bold leading-none">+</span>
            <span className="h-[8px] w-[1px] bg-[#666]" />
            <span className="text-[14px] font-bold leading-none">-</span>
          </div>
          <span className="mt-[10px] -ml-[2px] text-[14.5px] leading-[20px] text-[#888]">797</span>
          <div className="mt-[43px] flex h-[27px] items-center gap-[3px] bg-[#3c3c3c] pl-[2px]">
            <svg width="10" height="8" viewBox="0 0 10 8" stroke="#777" strokeDasharray="3 1"><path d="M0 1h10M0 4h10M0 7h10" /></svg>
            <span className="flex h-[22px] w-[22px] items-center justify-center border border-[#888] bg-[#666]">
              <svg width="14" height="10" viewBox="0 0 14 10"><rect width="14" height="10" fill="#fff" /><rect x="1" y="1" width="12" height="4" fill="#7fc0d8" /><rect x="1" y="5" width="12" height="4" fill="#2a7a5a" /></svg>
            </span>
          </div>
        </div>
      </div>
      <Docker />
      <FxWindow />
      <OscPopup />
    </div>
  );
}
